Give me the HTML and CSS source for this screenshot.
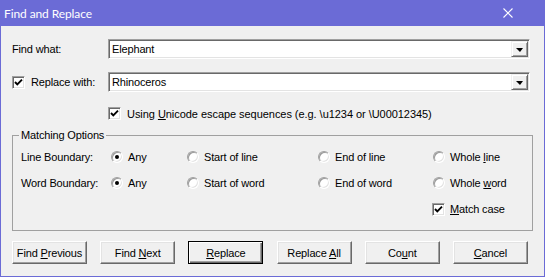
FILE: index.html
```html
<!DOCTYPE html>
<html lang="en">
<head>
  <meta charset="UTF-8">
  <title>Find and Replace</title>
  <link rel="stylesheet" href="styles.css">
</head>
<body>
  <div class="dialog">
    <div class="titlebar">
      <span class="title">Find and Replace</span>
      <svg class="close" width="10" height="10" viewBox="0 0 10 10">
        <path d="M0.5 0.5 L9.5 9.5 M9.5 0.5 L0.5 9.5" stroke="#fff" stroke-width="1.1" fill="none"/>
      </svg>
    </div>

    <div class="content">
      <div class="field-row">
        <label class="field-label">Find what:</label>
        <div class="combo">
          <span class="combo-text">Elephant</span>
          <span class="combo-btn"><span class="arrow"></span></span>
        </div>
      </div>

      <div class="field-row second">
        <label class="field-label">
          <span class="check"><svg width="11" height="11" viewBox="0 0 11 11"><path d="M2 5 L4.3 7.4 L9 2.6" stroke="#000" stroke-width="1.9" fill="none"/></svg></span>
          <span>Replace with:</span>
        </label>
        <div class="combo">
          <span class="combo-text">Rhinoceros</span>
          <span class="combo-btn"><span class="arrow"></span></span>
        </div>
      </div>

      <div class="unicode-row">
        <span class="check"><svg width="11" height="11" viewBox="0 0 11 11"><path d="M2 5 L4.3 7.4 L9 2.6" stroke="#000" stroke-width="1.9" fill="none"/></svg></span>
        <span>Using <u>U</u>nicode escape sequences (e.g. \u1234 or \U00012345)</span>
      </div>

      <fieldset class="group">
        <legend>Matching Options</legend>
        <div class="options">
          <span class="opt-label">Line Boundary:</span>
          <span class="opt"><span class="radio on"></span><span>Any</span></span>
          <span class="opt"><span class="radio"></span><span>Start of line</span></span>
          <span class="opt"><span class="radio"></span><span>End of line</span></span>
          <span class="opt"><span class="radio"></span><span>Whole <u>l</u>ine</span></span>

          <span class="opt-label">Word Boundary:</span>
          <span class="opt"><span class="radio on"></span><span>Any</span></span>
          <span class="opt"><span class="radio"></span><span>Start of word</span></span>
          <span class="opt"><span class="radio"></span><span>End of word</span></span>
          <span class="opt"><span class="radio"></span><span>Whole <u>w</u>ord</span></span>

          <span class="opt match-case">
            <span class="check"><svg width="11" height="11" viewBox="0 0 11 11"><path d="M2 5 L4.3 7.4 L9 2.6" stroke="#000" stroke-width="1.9" fill="none"/></svg></span>
            <span><u>M</u>atch case</span>
          </span>
        </div>
      </fieldset>

      <div class="buttons">
        <button>Find <u>P</u>revious</button>
        <button>Find <u>N</u>ext</button>
        <button class="default"><u>R</u>eplace</button>
        <button>Replace <u>A</u>ll</button>
        <button>Co<u>u</u>nt</button>
        <button><u>C</u>ancel</button>
      </div>
    </div>
  </div>
</body>
</html>
```

FILE: styles.css
```css
body {
  margin: 0;
  font-family: "Liberation Sans", Arial, sans-serif;
  font-size: 11px;
  letter-spacing: -0.15px;
  color: #000;
}

.dialog {
  width: 545px;
  height: 277px;
  box-sizing: border-box;
  background-color: #6b6bd6;
  padding: 0 1px 1px 1px;
  display: flex;
  flex-direction: column;
}

.titlebar {
  height: 26px;
  display: flex;
  align-items: center;
  justify-content: space-between;
  padding: 0 31px 0 3px;
}

.title {
  font-family: Lato, "Noto Sans", sans-serif;
  font-size: 12px;
  letter-spacing: -0.1px;
  color: #fff;
}

.content {
  flex: 1;
  background-color: #f0f0f0;
  padding: 13px 0 0 11px;
}

.field-row {
  display: flex;
  align-items: center;
  height: 20px;
}

.field-row.second {
  margin-top: 13px;
}

.field-label {
  width: 96px;
  display: flex;
  align-items: center;
  gap: 6px;
}

.combo {
  width: 422px;
  height: 20px;
  box-sizing: border-box;
  background: #fff;
  border: 1px solid;
  border-color: #a0a0a0 #fff #fff #a0a0a0;
  box-shadow: inset 1px 1px #696969, inset -1px -1px #e3e3e3;
  padding: 1px;
  display: flex;
  align-items: center;
}

.combo-text {
  padding-left: 2px;
}

.combo-btn {
  margin-left: auto;
  width: 17px;
  height: 16px;
  box-sizing: border-box;
  background: #f0f0f0;
  border: 1px solid;
  border-color: #f0f0f0 #696969 #696969 #f0f0f0;
  box-shadow: inset 1px 1px #fff, inset -1px -1px #a0a0a0;
  display: flex;
  align-items: center;
  justify-content: center;
}

.arrow {
  width: 0;
  height: 0;
  border-left: 4px solid transparent;
  border-right: 3px solid transparent;
  border-top: 4px solid #000;
  margin-top: 1px;
}

.check {
  width: 13px;
  height: 13px;
  box-sizing: border-box;
  flex: none;
  background: #fff;
  border: 1px solid;
  border-color: #a0a0a0 #fff #fff #a0a0a0;
  box-shadow: inset 1px 1px #696969, inset -1px -1px #e3e3e3;
  display: flex;
}

.unicode-row {
  margin: 15px 0 0 96px;
  height: 13px;
  display: flex;
  align-items: center;
  gap: 6px;
  white-space: pre;
  letter-spacing: -0.05px;
}

.group {
  margin: 9px 0 0 0;
  width: 521px;
  box-sizing: border-box;
  min-inline-size: 0;
  border: 1px solid #a0a0a0;
  padding: 2px 0 8px 8px;
}

.group legend {
  padding: 0 2px;
  margin-left: -2px;
  line-height: 13px;
}

.options {
  display: grid;
  grid-template-columns: 90px 76px 131px 115px auto;
  grid-auto-rows: 26px;
  align-items: center;
}

.opt {
  display: flex;
  align-items: center;
  gap: 5px;
  white-space: pre;
}

.radio {
  width: 12px;
  height: 12px;
  box-sizing: border-box;
  flex: none;
  border-radius: 50%;
  background: #fff;
  border: 1px solid;
  border-color: #a0a0a0 #fff #fff #a0a0a0;
  box-shadow: inset 1px 1px #9a9a9a, inset -1px -1px #e3e3e3;
  position: relative;
}

.radio.on::after {
  content: "";
  position: absolute;
  left: 3px;
  top: 3px;
  width: 4px;
  height: 4px;
  border-radius: 50%;
  background: #000;
}

.match-case {
  grid-column: 5;
  margin-left: -1px;
}

.buttons {
  margin-top: 10px;
  width: 516px;
  display: flex;
  justify-content: space-between;
}

button {
  width: 75px;
  height: 23px;
  padding: 0;
  font-family: "Liberation Sans", Arial, sans-serif;
  font-size: 11px;
  letter-spacing: -0.15px;
  color: #000;
  background: #f0f0f0;
  border: 1px solid;
  border-color: #fff #696969 #696969 #fff;
  box-shadow: inset -1px -1px #a0a0a0, inset 1px 1px #e3e3e3;
}

button.default {
  border: 1px solid #000;
  box-shadow: inset 1px 1px #fff, inset -1px -1px #696969, inset -2px -2px #a0a0a0;
}
```
